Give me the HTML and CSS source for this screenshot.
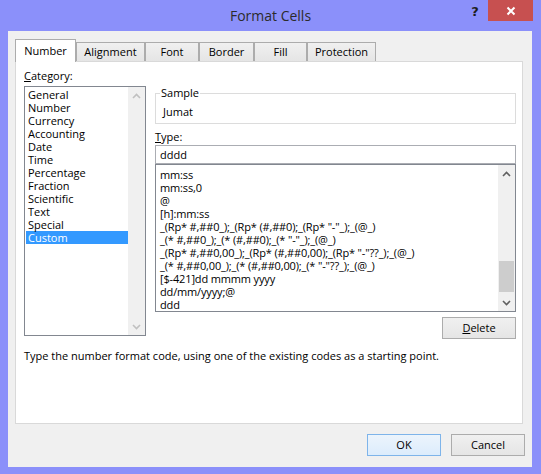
FILE: index.html
```html
<!DOCTYPE html>
<html>
<head>
<meta charset="utf-8">
<title>Format Cells</title>
<link rel="stylesheet" href="styles.css">
</head>
<body>
<div class="window">
  <div class="titlebar">
    <div class="title">Format Cells</div>
    <div class="controls">
      <div class="help">?</div>
      <div class="close">
        <svg width="10" height="10" viewBox="0 0 10 10"><path d="M1.5 1.5 L8.5 8.5 M8.5 1.5 L1.5 8.5" stroke="#fff" stroke-width="2" fill="none"/></svg>
      </div>
    </div>
  </div>
  <div class="client">
    <div class="tabs">
      <div class="tab active">Number</div>
      <div class="tab w-align">Alignment</div>
      <div class="tab w-font">Font</div>
      <div class="tab w-border">Border</div>
      <div class="tab w-fill">Fill</div>
      <div class="tab w-prot">Protection</div>
    </div>
    <div class="panel">
      <div class="panel-body">
        <div class="col-left">
          <div class="label"><u>C</u>ategory:</div>
          <div class="listbox cat-list">
            <ul class="items">
              <li>General</li>
              <li>Number</li>
              <li>Currency</li>
              <li>Accounting</li>
              <li>Date</li>
              <li>Time</li>
              <li>Percentage</li>
              <li>Fraction</li>
              <li>Scientific</li>
              <li>Text</li>
              <li>Special</li>
              <li class="selected">Custom</li>
            </ul>
            <div class="vscroll disabled">
              <div class="sbtn"><svg width="9" height="6" viewBox="0 0 9 6"><polyline points="1,5 4.5,1.5 8,5" fill="none" stroke-width="1.6"/></svg></div>
              <div class="track"></div>
              <div class="sbtn"><svg width="9" height="6" viewBox="0 0 9 6"><polyline points="1,1 4.5,4.5 8,1" fill="none" stroke-width="1.6"/></svg></div>
            </div>
          </div>
        </div>
        <div class="col-right">
          <div class="sample">
            <div class="sample-title">Sample</div>
            <div class="sample-value">Jumat</div>
          </div>
          <div class="label type-label"><u>T</u>ype:</div>
          <div class="input">dddd</div>
          <div class="listbox type-list">
            <ul class="items">
              <li>mm:ss</li>
              <li>mm:ss,0</li>
              <li>@</li>
              <li>[h]:mm:ss</li>
              <li>_(Rp* #,##0_);_(Rp* (#,##0);_(Rp* "-"_);_(@_)</li>
              <li>_(* #,##0_);_(* (#,##0);_(* "-"_);_(@_)</li>
              <li>_(Rp* #,##0,00_);_(Rp* (#,##0,00);_(Rp* "-"??_);_(@_)</li>
              <li>_(* #,##0,00_);_(* (#,##0,00);_(* "-"??_);_(@_)</li>
              <li>[$-421]dd mmmm yyyy</li>
              <li>dd/mm/yyyy;@</li>
              <li>ddd</li>
            </ul>
            <div class="vscroll">
              <div class="sbtn"><svg width="9" height="6" viewBox="0 0 9 6"><polyline points="1,5 4.5,1.5 8,5" fill="none" stroke-width="1.6"/></svg></div>
              <div class="track"><div class="thumb"></div></div>
              <div class="sbtn"><svg width="9" height="6" viewBox="0 0 9 6"><polyline points="1,1 4.5,4.5 8,1" fill="none" stroke-width="1.6"/></svg></div>
            </div>
          </div>
          <div class="delete-row"><button class="btn"><u>D</u>elete</button></div>
        </div>
      </div>
      <p class="help-text">Type the number format code, using one of the existing codes as a starting point.</p>
    </div>
    <div class="footer">
      <button class="btn default">OK</button>
      <button class="btn">Cancel</button>
    </div>
  </div>
</div>
</body>
</html>
```
FILE: styles.css
```css
html, body {
  margin: 0;
  padding: 0;
}
body {
  background: #8b90fa;
  font-family: "Open Sans", "Noto Sans", sans-serif;
  font-size: 11px;
  color: #000;
}
.window {
  width: 541px;
  height: 474px;
  background: #8b90fa;
  box-sizing: border-box;
}
.titlebar {
  height: 31px;
  display: grid;
  grid-template-columns: 1fr auto 1fr;
}
.title {
  grid-column: 2;
  font-size: 14px;
  line-height: 31px;
  color: #2b2b2b;
}
.controls {
  grid-column: 3;
  display: flex;
  justify-content: flex-end;
  align-items: flex-start;
  padding-right: 8px;
}
.help {
  width: 28px;
  height: 21px;
  padding-left: 2px;
  box-sizing: border-box;
  text-align: center;
  font-family: "DejaVu Sans", sans-serif;
  font-weight: bold;
  font-size: 13px;
  line-height: 24px;
  color: #1e1e1e;
}
.close {
  width: 45px;
  height: 21px;
  background: #c75050;
  display: flex;
  align-items: center;
  justify-content: center;
}
.client {
  margin-left: 8px;
  width: 524px;
  height: 436px;
  background: #f0f0f0;
  box-sizing: border-box;
  padding-top: 8px;
}
.tabs {
  display: flex;
  align-items: flex-end;
  height: 22px;
  margin-left: 7px;
}
.tab {
  box-sizing: border-box;
  height: 19px;
  border: 1px solid #acacac;
  border-bottom: none;
  background: linear-gradient(#f0f0f0, #e5e5e5);
  text-align: center;
  line-height: 16px;
  padding-top: 1px;
}
.tab.active {
  width: 61px;
  height: 23px;
  margin-bottom: -1px;
  background: #fff;
  position: relative;
  z-index: 1;
  padding-top: 3px;
}
.w-align { width: 69px; }
.w-font { width: 54px; }
.w-border { width: 55px; }
.w-fill { width: 53px; }
.w-prot { width: 69px; }
.panel {
  margin-left: 7px;
  width: 508px;
  height: 363px;
  box-sizing: border-box;
  border: 1px solid #d9d9d9;
  background: #fff;
  padding: 7px 6px 0 8px;
}
.panel-body {
  display: flex;
  gap: 9px;
}
.col-left {
  width: 122px;
  display: flex;
  flex-direction: column;
}
.label {
  line-height: 14px;
  height: 14px;
}
.listbox {
  display: flex;
  box-sizing: border-box;
  border: 1px solid #828790;
  background: #fff;
}
.cat-list {
  margin-top: 3px;
  height: 250px;
}
.items {
  list-style: none;
  margin: 0;
  padding: 0;
  flex: 1;
  min-width: 0;
  overflow: hidden;
}
.items li {
  line-height: 13px;
  height: 13px;
  white-space: nowrap;
}
.cat-list .items {
  margin-left: 1px;
  padding-top: 1px;
}
.cat-list .items li {
  padding-left: 2px;
}
.cat-list .items li.selected {
  background: #3399ff;
  color: #fff;
}
.vscroll {
  width: 17px;
  background: #f0f0f0;
  display: flex;
  flex-direction: column;
}
.sbtn {
  height: 17px;
  display: flex;
  align-items: center;
  justify-content: center;
}
.sbtn polyline {
  stroke: #606060;
}
.vscroll.disabled .sbtn polyline {
  stroke: #c0c0c0;
}
.track {
  flex: 1;
  display: flex;
  flex-direction: column;
}
.thumb {
  margin-top: auto;
  margin-bottom: 2px;
  height: 31px;
  margin-left: 1px;
  margin-right: 1px;
  background: #cdcdcd;
}
.col-right {
  width: 361px;
  padding-top: 17px;
  display: flex;
  flex-direction: column;
}
.sample {
  margin-top: 7px;
  border: 1px solid #dcdcdc;
  padding-bottom: 4px;
}
.sample-title {
  width: fit-content;
  margin: -8px 0 0 4px;
  padding: 0 1px;
  background: #fff;
  line-height: 14px;
}
.sample-value {
  line-height: 14px;
  margin: 5px 0 0 7px;
}
.type-label {
  margin-top: 6px;
}
.input {
  margin-top: 1px;
  height: 19px;
  box-sizing: border-box;
  border: 1px solid #abadb3;
  padding-left: 4px;
  line-height: 17px;
  background: #fff;
}
.type-list {
  height: 148px;
}
.type-list .items {
  padding: 3px 0 0 4px;
  letter-spacing: -0.15px;
}
.delete-row {
  display: flex;
  justify-content: flex-end;
  margin-top: 5px;
}
.btn {
  width: 74px;
  height: 22px;
  box-sizing: border-box;
  border: 1px solid #acacac;
  background: linear-gradient(#f0f0f0, #e5e5e5);
  font-family: "Open Sans", "Noto Sans", sans-serif;
  font-size: 11px;
  color: #000;
  padding: 0;
  margin: 0;
  line-height: 18px;
}
.btn.default {
  border-color: #7eb4ea;
  background: linear-gradient(#ecf4fc, #dcecfc);
}
.help-text {
  margin: 10px 0 0 0;
  line-height: 14px;
}
.footer {
  display: flex;
  justify-content: flex-end;
  gap: 10px;
  margin-top: 10px;
  padding-right: 7px;
}
```
